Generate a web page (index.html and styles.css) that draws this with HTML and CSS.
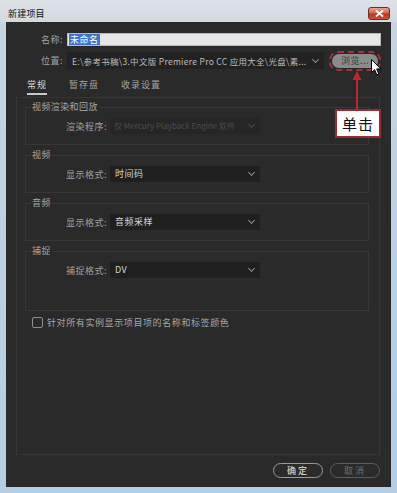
FILE: index.html
```html
<!DOCTYPE html>
<html lang="zh-CN">
<head>
  <meta charset="UTF-8" />
  <title>新建项目</title>
  <link rel="stylesheet" href="styles.css">
</head>
<body>
  <div class="window">
    <div class="titlebar">
      <span class="title">新建项目</span>
      <span class="close">
        <svg width="9" height="7" viewBox="0 0 9 7"><path d="M1 0.5 L8 6.5 M8 0.5 L1 6.5" stroke="#fff" stroke-width="1.8"/></svg>
      </span>
    </div>

    <div class="client">
      <div class="field-row name-row">
        <label>名称:</label>
        <div class="name-input"><span class="sel">未命名</span></div>
      </div>

      <div class="field-row loc-row">
        <label>位置:</label>
        <div class="select loc">
          <span class="value">E:\参考书稿\3.中文版 Premiere Pro CC 应用大全\光盘\素...</span>
          <span class="chev"></span>
        </div>
        <div class="browse"><span>浏览...</span></div>
      </div>

      <div class="tabs">
        <span class="tab active">常规</span>
        <span class="tab">暂存盘</span>
        <span class="tab">收录设置</span>
      </div>

      <div class="panel">
        <fieldset class="group">
          <legend>视频渲染和回放</legend>
          <div class="group-row">
            <label>渲染程序:</label>
            <div class="select disabled"><span class="value">仅 Mercury Playback Engine 软件</span><span class="chev"></span></div>
          </div>
        </fieldset>

        <fieldset class="group">
          <legend>视频</legend>
          <div class="group-row">
            <label>显示格式:</label>
            <div class="select"><span class="value">时间码</span><span class="chev"></span></div>
          </div>
        </fieldset>

        <fieldset class="group">
          <legend>音频</legend>
          <div class="group-row">
            <label>显示格式:</label>
            <div class="select"><span class="value">音频采样</span><span class="chev"></span></div>
          </div>
        </fieldset>

        <fieldset class="group tall">
          <legend>捕捉</legend>
          <div class="group-row">
            <label>捕捉格式:</label>
            <div class="select"><span class="value">DV</span><span class="chev"></span></div>
          </div>
        </fieldset>

        <div class="check-row">
          <span class="checkbox"></span>
          <span>针对所有实例显示项目项的名称和标签颜色</span>
        </div>
      </div>

      <div class="footer">
        <button class="btn ok">确定</button>
        <button class="btn cancel">取消</button>
      </div>
    </div>

    <!-- annotation -->
    <svg class="arrow" width="10" height="38" viewBox="0 0 10 38">
      <path d="M5 0 L0.5 9 L9.5 9 Z" fill="#c0262e"/>
      <rect x="4" y="8" width="2" height="30" fill="#c0262e"/>
    </svg>
    <div class="callout">单击</div>
    <svg class="cursor" width="11" height="17" viewBox="0 0 11 17">
      <path d="M0.5 0.5 L0.5 13.5 L3.6 10.6 L5.8 15.8 L7.8 15 L5.7 9.9 L9.8 9.9 Z" fill="#fff" stroke="#000" stroke-width="1"/>
    </svg>
  </div>
</body>
</html>
```

FILE: styles.css
```css
* {
  box-sizing: border-box;
}
body {
  margin: 0;
  width: 397px;
  height: 493px;
  overflow: hidden;
  font-family: "Noto Sans CJK SC", "Liberation Sans", sans-serif;
  font-size: 9px;
  background: #b9d0e2;
}
.window {
  position: relative;
  width: 397px;
  height: 493px;
  display: flex;
  flex-direction: column;
  padding: 0 6px 6px 6px;
  background: linear-gradient(to bottom, #dde2e7 0, #d2d9e0 22px, #c3d5e4 22px, #b3cde2 100%);
}
.titlebar {
  height: 22px;
  display: flex;
  align-items: center;
  justify-content: space-between;
  padding: 5px 1px 0 2px;
}
.title {
  color: #111;
  font-size: 9px;
  letter-spacing: 0.2px;
}
.close {
  width: 22px;
  height: 13px;
  display: flex;
  align-items: center;
  justify-content: center;
  border: 1px solid #6f2a22;
  border-radius: 3px;
  background: linear-gradient(#e6a596 0, #d0654f 45%, #bb3620 55%, #c9533b 100%);
}

/* dark area */
.client {
  flex: 1;
  display: flex;
  flex-direction: column;
  background: #2a2a2b;
  color: #9c9c9c;
  letter-spacing: 0.5px;
}
.field-row {
  display: flex;
  align-items: center;
}
.field-row label {
  width: 57px;
  margin-right: 4px;
  text-align: right;
  color: #a2a2a2;
}
.name-row {
  margin-top: 11px;
  height: 13px;
}
.name-input {
  width: 314px;
  height: 13px;
  background: #e6e6e6;
  border: 1px solid #b9b9b9;
  display: flex;
  align-items: center;
  padding-left: 1px;
}
.sel {
  background: #3f74c9;
  color: #fff;
  line-height: 11px;
  padding: 0 1px;
}
.loc-row {
  margin-top: 6px;
  height: 17px;
}
.select {
  display: flex;
  align-items: center;
  justify-content: space-between;
  height: 16px;
  width: 150px;
  background: #1f1f1f;
  padding: 0 6px 0 5px;
  color: #d6d6d6;
}
.select .value {
  white-space: nowrap;
  overflow: hidden;
  line-height: 16px;
}
.chev {
  width: 5px;
  height: 5px;
  flex: none;
  margin-bottom: 3px;
  border-right: 1px solid #8c8c8c;
  border-bottom: 1px solid #8c8c8c;
  transform: rotate(45deg);
}
.select.loc {
  width: 257px;
  height: 17px;
  background: #222223;
  color: #bdbdbd;
  font-size: 8.5px;
  letter-spacing: 0.3px;
}
.select.disabled {
  background: #262627;
  color: #4c4c4c;
  font-size: 8px;
  letter-spacing: 0;
  padding-left: 4px;
}
.select.disabled .chev {
  border-color: #4a4a4a;
}
.browse {
  margin-left: 5px;
  width: 52px;
  height: 20px;
  border: 2px dashed #a92f38;
  border-radius: 9px;
  padding: 1px;
  display: flex;
}
.browse span {
  flex: 1;
  background: #8b8b8b;
  border-radius: 7px;
  color: #3a3a3a;
  text-align: center;
  line-height: 14px;
}

.tabs {
  display: flex;
  margin: 8px 0 0 21px;
  gap: 22px;
}
.tab {
  line-height: 16px;
  border-bottom: 2px solid transparent;
  color: #a4a4a4;
  letter-spacing: 1px;
}
.tab.active {
  color: #d8d8d8;
  border-bottom-color: #c8c8c8;
}

.panel {
  margin: 2px 0 0 10px;
  width: 364px;
  height: 358px;
  border: 1px solid #353536;
  padding: 4px 10px 0 8px;
}
.group {
  margin: 0 0 5px 0;
  padding: 6px 0 10px 0;
  border: 1px solid #373738;
  min-width: 0;
}
.group.tall {
  padding-bottom: 32px;
}
.group legend {
  margin-left: 5px;
  padding: 0 1px;
  line-height: 10px;
  color: #a6a6a6;
  letter-spacing: 0.4px;
}
.group-row {
  display: flex;
  align-items: center;
}
.group-row label {
  width: 81px;
  margin-right: 3px;
  text-align: right;
  color: #a0a0a0;
}
.check-row {
  display: flex;
  align-items: center;
  margin: 2px 0 0 7px;
  gap: 4px;
  color: #a6a6a6;
  letter-spacing: 0.6px;
}
.checkbox {
  width: 11px;
  height: 11px;
  border: 1.5px solid #8e8e8e;
  border-radius: 2px;
}

.footer {
  display: flex;
  justify-content: flex-end;
  gap: 7px;
  padding: 8px 11px 0 0;
}
.btn {
  width: 50px;
  height: 15px;
  padding: 0;
  border: 1.5px solid #9a9a9a;
  border-radius: 8px;
  background: #2b2b2c;
  font-family: inherit;
  font-size: 9px;
  letter-spacing: 2px;
  line-height: 11px;
}
.btn.ok {
  color: #e6e6e6;
}
.btn.cancel {
  color: #6e6e6e;
  border-color: #5c5c5c;
}

/* annotation overlay */
.arrow {
  position: absolute;
  left: 352px;
  top: 71px;
}
.callout {
  position: absolute;
  left: 335px;
  top: 109px;
  width: 46px;
  height: 29px;
  border: 2px solid #9c2a32;
  background: #fff;
  color: #111;
  font-size: 15px;
  line-height: 25px;
  text-align: center;
  letter-spacing: 1px;
}
.cursor {
  position: absolute;
  left: 371px;
  top: 59px;
}
```
